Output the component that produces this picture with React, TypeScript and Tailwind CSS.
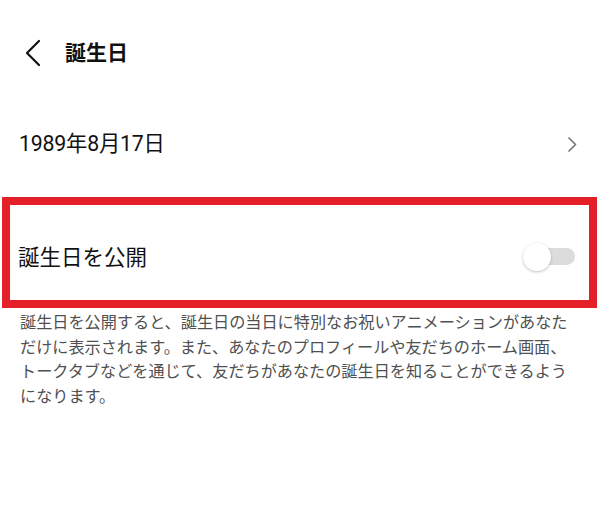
import React from "react";

const FONT = { fontFamily: '"Roboto", "Noto Sans CJK JP", sans-serif' };

export default function App() {
  return (
    <div className="w-[600px] h-[523px] bg-white text-[#111111] overflow-hidden" style={FONT}>
      {/* Header */}
      <div className="h-[106px] flex items-center pl-[24px]">
        <svg width="18" height="28" viewBox="0 0 18 28" className="shrink-0">
          <path d="M15 2 L3 14 L15 26" fill="none" stroke="#111" strokeWidth="2.2" strokeLinecap="round" strokeLinejoin="round" />
        </svg>
        <span className="ml-[23px] text-[21px] font-bold leading-none">誕生日</span>
      </div>

      {/* Date row */}
      <div className="h-[76px] flex items-center justify-between pl-[19px] pr-[22px]">
        <span className="text-[21.3px] leading-none tracking-[-0.2px]">1989年8月17日</span>
        <svg width="12" height="17" viewBox="0 0 12 17">
          <path d="M3 2 L9.5 8.5 L3 15" fill="none" stroke="#777777" strokeWidth="1.7" strokeLinecap="round" strokeLinejoin="round" />
        </svg>
      </div>

      {/* Highlighted toggle row */}
      <div className="mt-[15px] ml-[2px] w-[595px] h-[111px] border-[8px] border-[#e41f27] flex items-center justify-between pl-[8px] pr-[14px] pt-[10px]">
        <span className="text-[21.5px] leading-none">誕生日を公開</span>
        <div className="relative w-[52px] h-[30px]">
          <div className="absolute right-0 top-[5px] w-[42px] h-[17px] rounded-full bg-[#dcdcdc]" />
          <div className="absolute left-0 top-0 w-[28px] h-[28px] rounded-full bg-white shadow-[0_1px_3px_rgba(0,0,0,0.25)]" />
        </div>
      </div>

      {/* Description */}
      <p className="mt-[3px] pl-[20px] text-[16.15px] leading-[24.5px] text-[#505050] whitespace-nowrap">
        誕生日を公開すると、誕生日の当日に特別なお祝いアニメーションがあなた
        <br />
        だけに表示されます。また、あなたのプロフィールや友だちのホーム画面、
        <br />
        トークタブなどを通じて、友だちがあなたの誕生日を知ることができるよう
        <br />
        になります。
      </p>
    </div>
  );
}
